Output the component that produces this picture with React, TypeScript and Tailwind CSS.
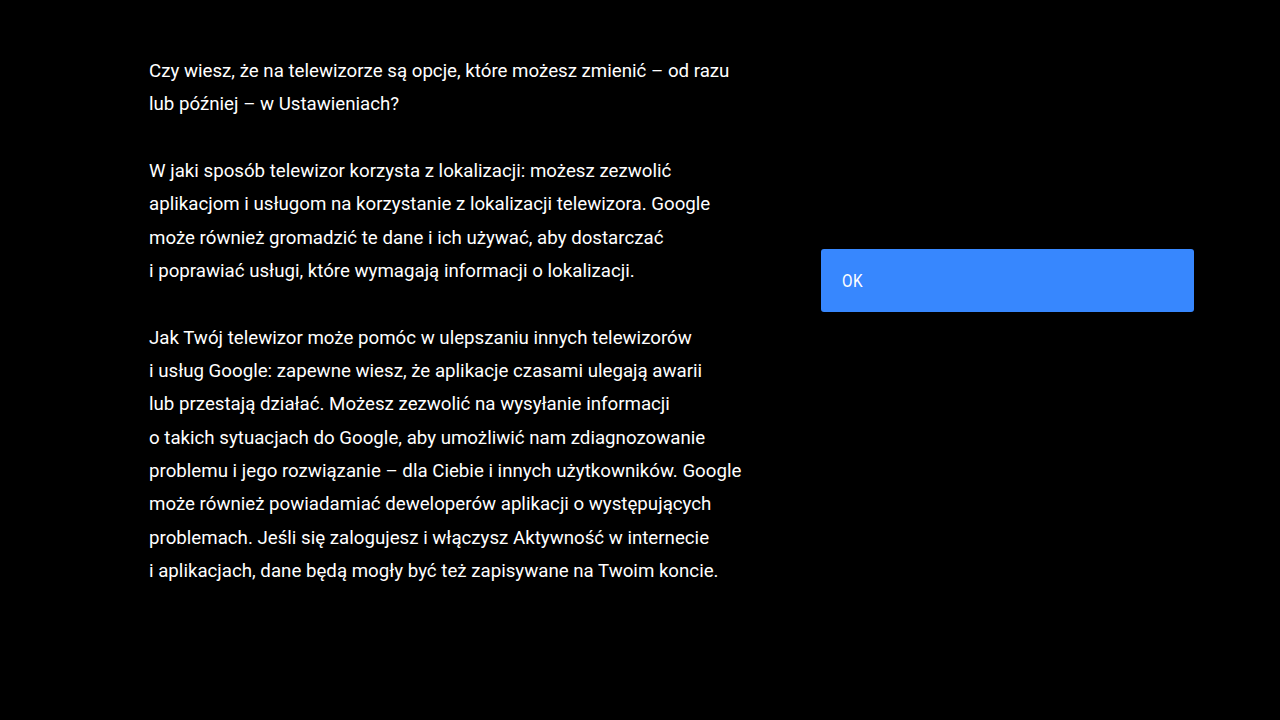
const paragraphs: string[][] = [
  [
    "Czy wiesz, że na telewizorze są opcje, które możesz zmienić – od razu",
    "lub później – w Ustawieniach?",
  ],
  [
    "W jaki sposób telewizor korzysta z lokalizacji: możesz zezwolić",
    "aplikacjom i usługom na korzystanie z lokalizacji telewizora. Google",
    "może również gromadzić te dane i ich używać, aby dostarczać",
    "i poprawiać usługi, które wymagają informacji o lokalizacji.",
  ],
  [
    "Jak Twój telewizor może pomóc w ulepszaniu innych telewizorów",
    "i usług Google: zapewne wiesz, że aplikacje czasami ulegają awarii",
    "lub przestają działać. Możesz zezwolić na wysyłanie informacji",
    "o takich sytuacjach do Google, aby umożliwić nam zdiagnozowanie",
    "problemu i jego rozwiązanie – dla Ciebie i innych użytkowników. Google",
    "może również powiadamiać deweloperów aplikacji o występujących",
    "problemach. Jeśli się zalogujesz i włączysz Aktywność w internecie",
    "i aplikacjach, dane będą mogły być też zapisywane na Twoim koncie.",
  ],
];

const App = () => {
  return (
    <div className="w-[1280px] h-[720px] bg-black flex flex-row font-['Roboto',sans-serif] overflow-hidden">
      <div className="w-[672px] pl-[149px] pt-[55px] flex flex-col gap-[33.35px]">
        {paragraphs.map((p, i) => (
          <p key={i} className="text-white text-[18.7px] leading-[33.35px] whitespace-nowrap">
            {p.map((line, j) => (
              <span key={j} className="block">
                {line}
              </span>
            ))}
          </p>
        ))}
      </div>
      <div className="pl-[149px] pt-[249px]">
        <button className="w-[373px] h-[63px] bg-[#3787fe] rounded-[3px] flex items-center pl-[21px] text-white text-[18px]">
          <span className="inline-block origin-left scale-x-[0.85] tracking-[0.5px]">OK</span>
        </button>
      </div>
    </div>
  );
};

export default App;
